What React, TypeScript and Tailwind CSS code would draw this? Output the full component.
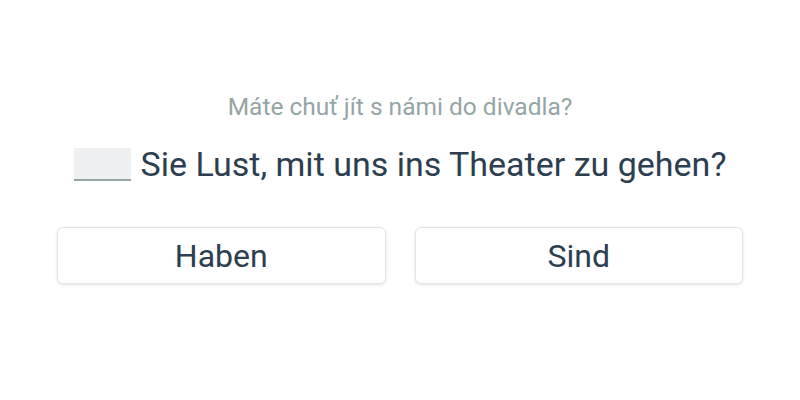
export default function App() {
  const options = ['Haben', 'Sind']

  return (
    <div className="w-[800px] h-[400px] bg-white flex flex-col items-center font-['Roboto',sans-serif]">
      <p className="mt-[91px] text-[24.5px] leading-[32px] text-[#95a5a6]">Máte chuť jít s námi do divadla?</p>
      <div className="mt-[21px] flex items-center text-[34px] leading-[40px] text-[#2c3e50]">
        <span className="inline-block w-[57px] h-[33px] bg-[#eef0f2] border-b-2 border-[#95a5a6] mr-[10px]" />
        <span>Sie Lust, mit uns ins Theater zu gehen?</span>
      </div>
      <div className="mt-[43px] grid grid-cols-2 gap-[29px] w-[686px]">
        {options.map((opt) => (
          <button
            key={opt}
            className="h-[57px] rounded-md border border-[#e2e5e7] bg-white shadow-[0_1px_3px_rgba(0,0,0,0.12)] text-[32px] text-[#2c3e50]"
          >
            {opt}
          </button>
        ))}
      </div>
    </div>
  )
}
